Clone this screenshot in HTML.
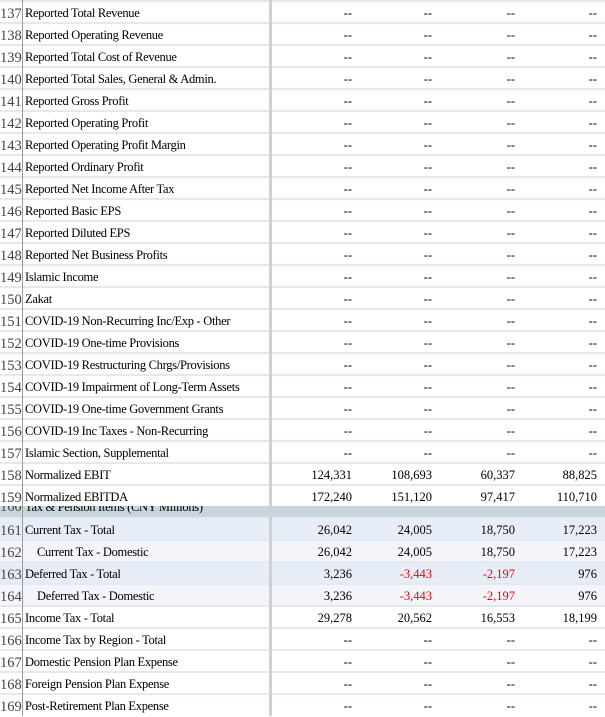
<!DOCTYPE html><html><head><style>
body{margin:0;width:605px;height:716px;overflow:hidden;background:#fff;font-family:"Liberation Serif","Noto Serif CJK SC",serif;font-size:12.5px;color:#000;position:relative}
.r{position:absolute;left:0;width:605px;height:22px;box-sizing:border-box;border-top:2px solid #e4e8f2}
.n{position:absolute;left:0;width:21px;text-align:right;top:2px;font-size:14.5px;color:#444;line-height:20px}
.l{position:absolute;left:25px;top:1px;line-height:20px;white-space:nowrap;letter-spacing:-0.3px}
.v{position:absolute;top:1px;line-height:20px;text-align:right;width:80px}
.red{color:#f00}
.g{position:absolute;left:22px;top:0;width:1px;height:716px;background:#999}
.s{position:absolute;left:269px;top:0;width:3px;height:716px;background:#d0d0d0}
</style></head><body>
<div id="rows"></div>
<script>
var a=[
[137,"Reported Total Revenue"],[138,"Reported Operating Revenue"],[139,"Reported Total Cost of Revenue"],[140,"Reported Total Sales, General & Admin."],[141,"Reported Gross Profit"],[142,"Reported Operating Profit"],[143,"Reported Operating Profit Margin"],[144,"Reported Ordinary Profit"],[145,"Reported Net Income After Tax"],[146,"Reported Basic EPS"],[147,"Reported Diluted EPS"],[148,"Reported Net Business Profits"],[149,"Islamic Income"],[150,"Zakat"],[151,"COVID-19 Non-Recurring Inc/Exp - Other"],[152,"COVID-19 One-time Provisions"],[153,"COVID-19 Restructuring Chrgs/Provisions"],[154,"COVID-19 Impairment of Long-Term Assets"],[155,"COVID-19 One-time Government Grants"],[156,"COVID-19 Inc Taxes - Non-Recurring"],[157,"Islamic Section, Supplemental"],
[158,"Normalized EBIT",["124,331","108,693","60,337","88,825"]],[159,"Normalized EBITDA",["172,240","151,120","97,417","110,710"]]];
var b=[
[161,"Current Tax - Total",["26,042","24,005","18,750","17,223"],"#e6edf6",0],
[162,"Current Tax - Domestic",["26,042","24,005","18,750","17,223"],"#f3f5f9",1],
[163,"Deferred Tax - Total",["3,236","-3,443","-2,197","976"],"#e6edf6",0],
[164,"Deferred Tax - Domestic",["3,236","-3,443","-2,197","976"],"#f3f5f9",1],
[165,"Income Tax - Total",["29,278","20,562","16,553","18,199"],"#fff",0],
[166,"Income Tax by Region - Total",null,"#fff",0],[167,"Domestic Pension Plan Expense",null,"#fff",0],[168,"Foreign Pension Plan Expense",null,"#fff",0],[169,"Post-Retirement Plan Expense",null,"#fff",0]];
var R=[352,432,515,597],h="";
function row(top,n,l,v,bg,ind){
 v=v||["--","--","--","--"];
 var s='<div class="r" style="top:'+top+'px;background:'+(bg||'#fff')+'"><div class="n">'+n+'</div><div class="l" style="left:'+(ind?37:25)+'px">'+l.replace(/&/g,'&amp;')+'</div>';
 for(var i=0;i<4;i++)s+='<div class="v'+(v[i][0]=='-'&&v[i]!='--'?' red':'')+'" style="left:'+(R[i]-80)+'px">'+v[i]+'</div>';
 return s+'</div>';}
a.forEach(function(x,i){h+=row(i*22,x[0],x[1],x[2]);});
h+='<div style="position:absolute;top:506px;left:0;width:605px;height:11px;background:#c8d5dd;overflow:hidden"><div class="n" style="top:-9px">160</div><div class="l" style="top:-9px">Tax &amp; Pension Items (CNY Millions)</div></div>';
b.forEach(function(x,i){h+=row(517+i*22,x[0],x[1],x[2],x[3],x[4]);});
document.getElementById('rows').innerHTML=h;
</script>
<div class="g"></div><div class="s"></div>
</body></html>
